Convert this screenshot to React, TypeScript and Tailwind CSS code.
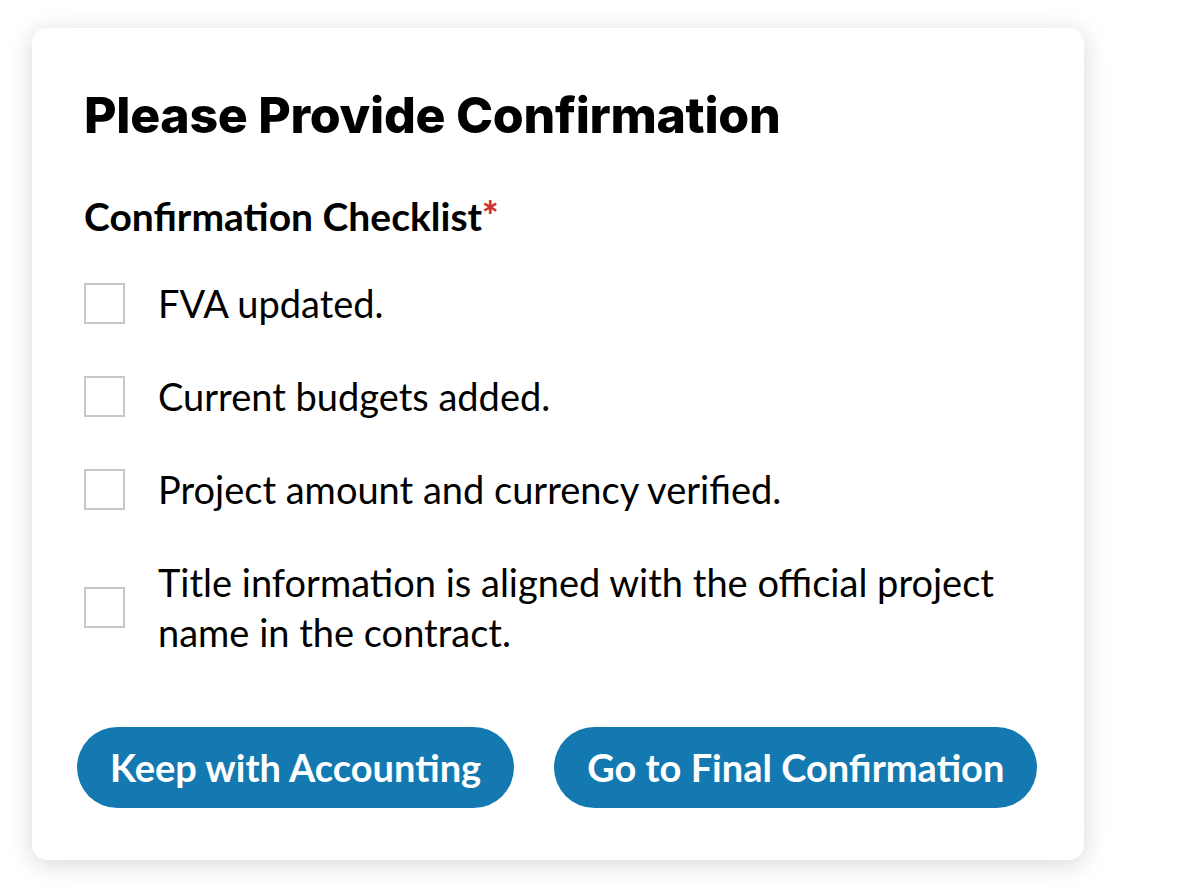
import { useState } from 'react';

const checklistItems = [
  'FVA updated.',
  'Current budgets added.',
  'Project amount and currency verified.',
  'Title information is aligned with the official project name in the contract.',
];

export default function App() {
  const [checked, setChecked] = useState<boolean[]>(checklistItems.map(() => false));

  const toggle = (index: number) => {
    setChecked((prev) => prev.map((value, i) => (i === index ? !value : value)));
  };

  return (
    <div className="min-h-screen bg-white pt-[28px] pl-[32px] font-['Lato',sans-serif]">
      <div className="w-[1052px] rounded-[15px] bg-white pt-[62px] pl-[52px] pr-[45px] pb-[52px] shadow-[0_4px_26px_rgba(0,0,0,0.16)]">
        <h2 className="font-['Inter',sans-serif] text-[50px] leading-[50px] font-extrabold tracking-[-0.3px] text-black">
          Please Provide Confirmation
        </h2>

        <h3 className="mt-[54px] text-[39px] leading-[44px] font-bold text-black">
          Confirmation Checklist<span className="text-[#d0342c] font-black">*</span>
        </h3>

        <div className="mt-[40px] flex flex-col gap-[43px]">
          {checklistItems.map((item, index) => (
            <label key={item} className="flex items-center gap-[33px] cursor-pointer">
              <span
                onClick={() => toggle(index)}
                className="flex h-[41px] w-[41px] shrink-0 items-center justify-center border-2 border-[#c8c8c8] bg-white"
              >
                {checked[index] && <span className="h-[21px] w-[21px] bg-[#1479b0]" />}
              </span>
              <span className="max-w-[850px] text-[38px] leading-[50px] text-black">{item}</span>
            </label>
          ))}
        </div>

        <div className="mt-[70px] ml-[-7px] flex gap-[40px]">
          <button className="h-[81px] rounded-full bg-[#1479b0] px-[33px] text-[38px] font-bold text-white">
            Keep with Accounting
          </button>
          <button className="h-[81px] rounded-full bg-[#1479b0] px-[33px] text-[38px] font-bold text-white">
            Go to Final Confirmation
          </button>
        </div>
      </div>
    </div>
  );
}
